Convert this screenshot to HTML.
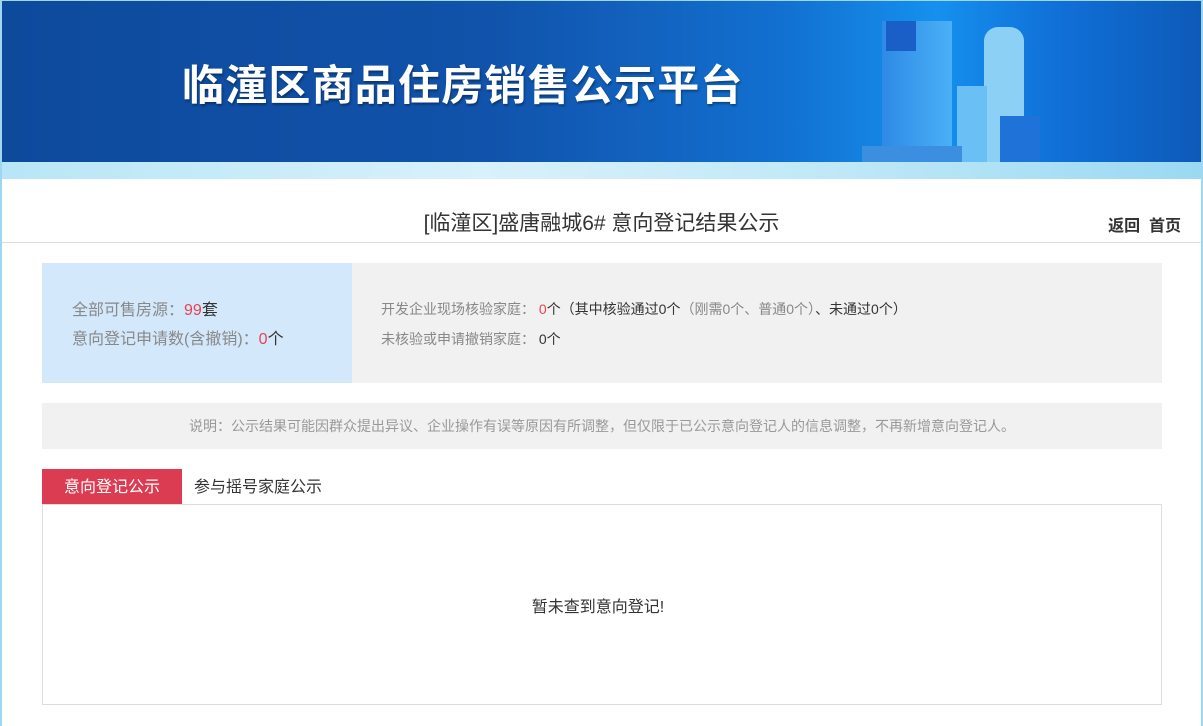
<!DOCTYPE html>
<html><head><meta charset="utf-8"><style>
*{margin:0;padding:0;box-sizing:border-box}
body{width:1203px;height:726px;overflow:hidden;background:#fff;font-family:"Liberation Sans","Noto Sans CJK SC",sans-serif;position:relative}
.frame{position:absolute;left:0;top:0;width:1203px;height:726px;border-left:2px solid #9fd6f2;border-right:2px solid #9fd6f2;border-top:1px solid #9fd6f2}
.banner{position:absolute;left:2px;top:1px;width:1199px;height:161px;background:linear-gradient(90deg,#0d4a9c 0%,#1152aa 40%,#1270d0 65%,#1590ee 78%,#1070d8 88%,#0d5ab8 100%);overflow:hidden}
.banner h1{position:absolute;left:180px;top:54px;font-size:42px;font-weight:bold;color:#fff;letter-spacing:1.2px;font-family:"Noto Sans CJK SC",sans-serif;text-shadow:1px 2px 2px rgba(0,0,0,.35);line-height:56px}
.strip{position:absolute;left:2px;top:162px;width:1199px;height:17px;background:linear-gradient(90deg,#b8e6f6,#d8f1fa 40%,#bfe8f7 70%,#9ad9f3)}
.b{position:absolute;background:#3aa0ee}
.title{position:absolute;left:0;width:1203px;top:207px;text-align:center;font-size:21px;color:#333}
.nav{position:absolute;right:22px;top:212px;font-size:16px;font-weight:bold;color:#333}
.hr{position:absolute;left:2px;right:2px;top:242px;height:1px;background:#ddd}
.stat{position:absolute;left:42px;top:263px;width:1120px;height:120px;background:#f1f1f1}
.stat .l{position:absolute;left:0;top:0;width:310px;height:120px;background:#d4e8fc;padding:33px 0 0 30px;font-size:16px;color:#888;line-height:29px}
.red{color:#e8424f}.dk{color:#333}
.stat .r{position:absolute;left:339px;top:31px;font-size:14px;color:#888;line-height:30px}
.note{position:absolute;left:42px;top:403px;width:1120px;height:46px;background:#f1f1f1;text-align:center;font-size:14px;color:#999;line-height:46px}
.tab1{position:absolute;left:42px;top:469px;width:140px;height:35px;background:#dc3c52;color:#fff;font-size:16px;text-align:center;line-height:37px}
.tab2{position:absolute;left:194px;top:469px;font-size:16px;color:#333;line-height:37px}
.box{position:absolute;left:42px;top:504px;width:1120px;height:201px;border:1px solid #ddd;text-align:center;font-size:16px;color:#333;padding-top:88px;padding-right:8px}
</style></head><body>
<div class="banner">
<h1>临潼区商品住房销售公示平台</h1>
<div class="b" style="left:880px;top:20px;width:70px;height:141px;background:linear-gradient(90deg,#2e8ae6,#4ab0f6)"></div>
<div class="b" style="left:884px;top:20px;width:30px;height:30px;background:#1a5fc8"></div>
<div class="b" style="left:982px;top:26px;width:40px;height:135px;background:#8cd0f6;border-radius:14px 14px 0 0"></div>
<div class="b" style="left:955px;top:85px;width:30px;height:76px;background:#6ac0f4"></div>
<div class="b" style="left:998px;top:115px;width:40px;height:46px;background:#1e72d8"></div>
<div class="b" style="left:860px;top:145px;width:100px;height:16px;background:#3c8ee0"></div>
</div>
<div class="strip"></div>
<div class="frame"></div>
<div class="title">[临潼区]盛唐融城6# 意向登记结果公示</div>
<div class="nav">返回&nbsp; 首页</div>
<div class="hr"></div>
<div class="stat">
<div class="l">全部可售房源：<span class="red">99</span><span class="dk">套</span><br>意向登记申请数(含撤销)：<span class="red">0</span><span class="dk">个</span></div>
<div class="r">开发企业现场核验家庭： <span class="red">0</span><span class="dk">个（其中核验通过0个</span>（刚需0个、普通0个）<span class="dk">、未通过0个）</span><br>未核验或申请撤销家庭： <span class="dk">0个</span></div>
</div>
<div class="note">说明：公示结果可能因群众提出异议、企业操作有误等原因有所调整，但仅限于已公示意向登记人的信息调整，不再新增意向登记人。</div>
<div class="tab1">意向登记公示</div>
<div class="tab2">参与摇号家庭公示</div>
<div class="box">暂未查到意向登记!</div>
</body></html>
